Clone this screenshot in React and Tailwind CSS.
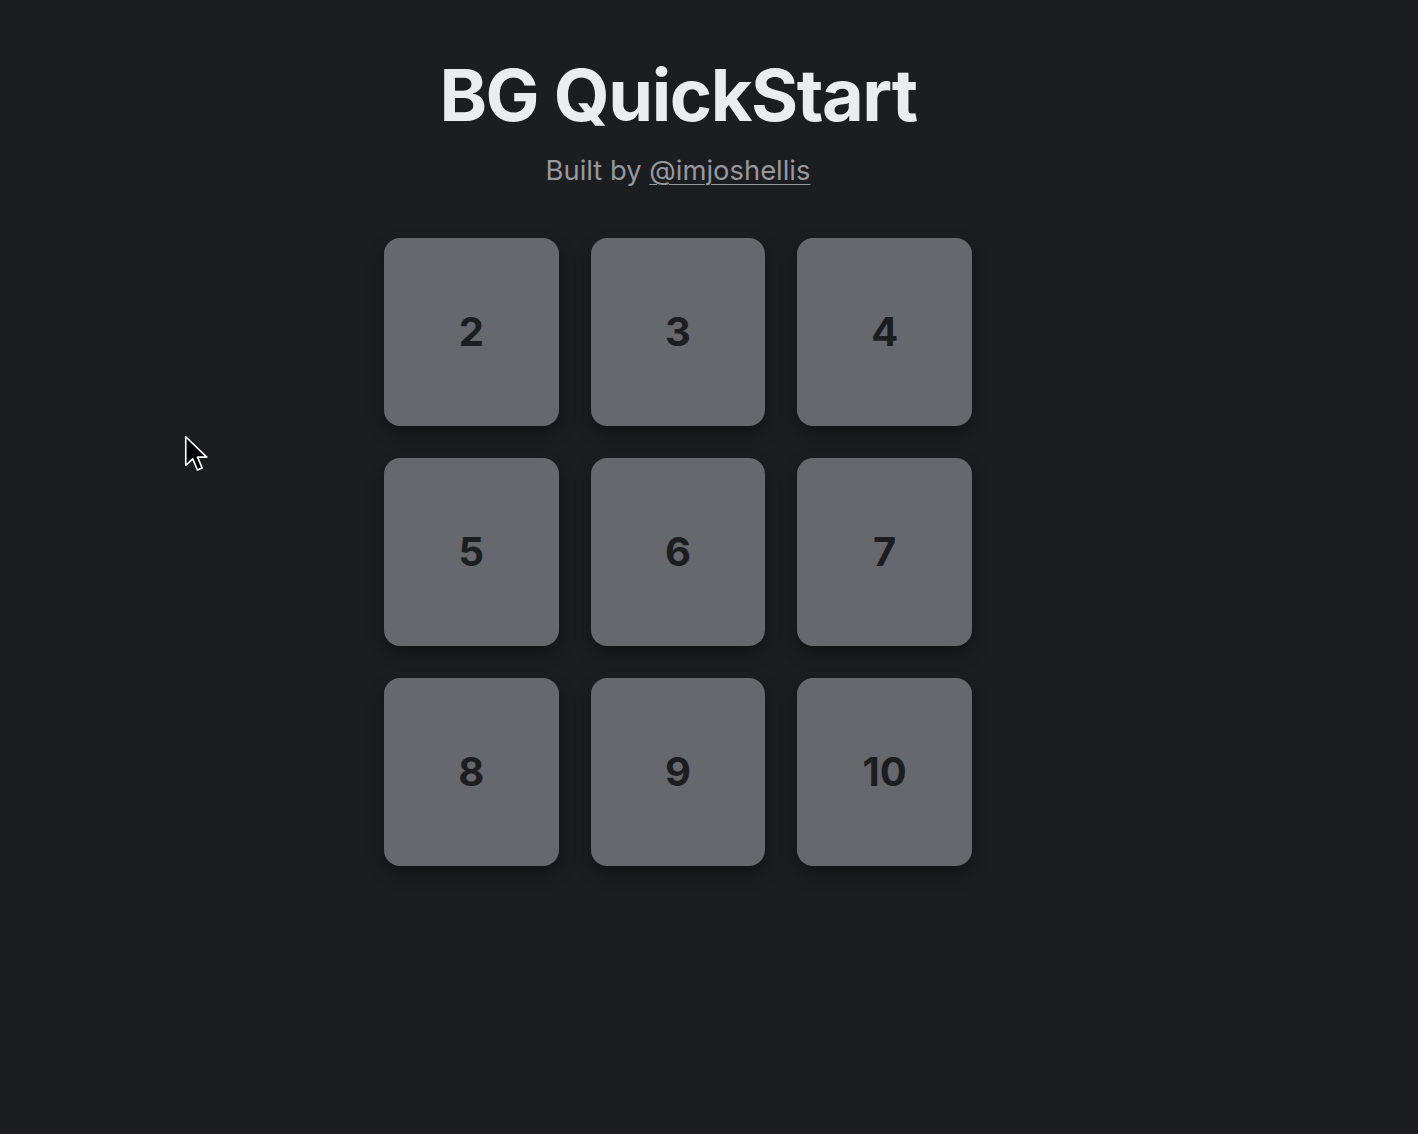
export default function App() {
  const nums = [2, 3, 4, 5, 6, 7, 8, 9, 10];
  return (
    <div
      className="relative min-h-[1134px] w-full bg-[#1c1d21] pr-[62px]"
      style={{ fontFamily: "Inter, 'Noto Sans', sans-serif" }}
    >
      <div className="flex flex-col items-center pt-[51px]">
        <h1 className="text-[72px] font-bold leading-[88px] tracking-[-0.02em] text-[#ebecf0]">
          BG QuickStart
        </h1>
        <p className="mt-[13px] text-[27.4px] leading-[36px] text-[#97989d]">
          Built by{" "}
          <a href="#" className="underline decoration-1 underline-offset-4">
            @imjoshellis
          </a>
        </p>
        <div className="mt-[50px] grid w-[588px] grid-cols-3 gap-[32px]">
          {nums.map((n) => (
            <div
              key={n}
              className="flex h-[188px] items-center justify-center rounded-[16px] bg-[#67686d] shadow-[0_8px_16px_rgba(0,0,0,0.35)]"
            >
              <span className="text-[40px] font-bold text-[#1c1d21]">{n}</span>
            </div>
          ))}
        </div>
      </div>
      <svg
        className="absolute left-[184px] top-[435px]"
        width="28"
        height="42"
        viewBox="0 0 24 36"
      >
        <path
          d="M1.5 1.5 L1.5 26 L7.5 20.5 L11.5 30 L15.5 28.2 L11.6 19 L19.5 19 Z"
          fill="#000"
          stroke="#fff"
          strokeWidth="1.4"
          strokeLinejoin="round"
        />
      </svg>
    </div>
  );
}
